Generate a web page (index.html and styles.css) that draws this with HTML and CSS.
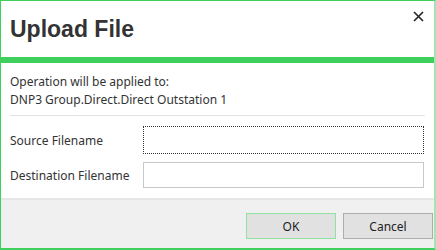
FILE: index.html
```html
<!DOCTYPE html>
<html lang="en">
<head>
    <meta charset="UTF-8">
    <title>Upload File</title>
    <link rel="stylesheet" href="styles.css">
</head>
<body>
    <div class="dialog">
        <div class="dialog-header">
            <h2>Upload File</h2>
            <button class="close" aria-label="Close">
                <svg width="11" height="11" viewBox="0 0 11 11"><path d="M1 1L10 10M10 1L1 10" stroke="#222" stroke-width="1.6"/></svg>
            </button>
        </div>
        <div class="accent"></div>

        <div class="dialog-body">
            <div class="target">
                <p>Operation will be applied to:</p>
                <p>DNP3 Group.Direct.Direct Outstation 1</p>
            </div>
            <div class="field">
                <label for="src">Source Filename</label>
                <input type="text" id="src" class="focused">
            </div>
            <div class="field">
                <label for="dst">Destination Filename</label>
                <input type="text" id="dst">
            </div>
        </div>

        <div class="dialog-footer">
            <button class="btn btn-default">OK</button>
            <button class="btn">Cancel</button>
        </div>
    </div>
</body>
</html>
```

FILE: styles.css
```css
body {
    margin: 0;
    font-family: "Noto Sans", "Open Sans", sans-serif;
    font-size: 12px;
    color: #333;
    background: white;
}
.dialog {
    box-sizing: border-box;
    width: 436px;
    height: 250px;
    display: flex;
    flex-direction: column;
    border-top: 1px solid #3ecf5c;
    border-left: 1px solid #3ecf5c;
    border-bottom: 2px solid #3ecf5c;
    border-right: 2px solid #a3e6b2;
}
.dialog-header {
    position: relative;
    height: 56px;
    padding-left: 9px;
    display: flex;
    align-items: center;
}
.dialog-header h2 {
    margin: 0;
    font-family: "Liberation Sans", Arial, sans-serif;
    font-size: 23px;
    font-weight: bold;
    color: #333;
}
.close {
    position: absolute;
    top: 9px;
    right: 9px;
    width: 13px;
    height: 13px;
    padding: 1px;
    border: none;
    background: none;
    line-height: 0;
}
.accent {
    height: 6px;
    background: #3ecf5c;
}
.dialog-body {
    flex: 1;
    padding: 10px 9px 0 9px;
}
.target {
    padding-bottom: 6px;
    border-bottom: 1px solid #e3e3e3;
    margin-bottom: 10px;
}
.target p {
    margin: 0;
    line-height: 18px;
}
.field {
    display: flex;
    align-items: center;
    margin-bottom: 8px;
}
.field label {
    width: 133px;
}
.field input {
    box-sizing: border-box;
    width: 281px;
    height: 26px;
    border: 1px solid #c8c8c8;
    font: inherit;
}
.field input.focused {
    height: 28px;
    border: 1px dotted #333;
}
.dialog-footer {
    height: 50px;
    background: #f0f0f0;
    border-top: 2px solid #e6e6e6;
    display: flex;
    justify-content: flex-end;
    align-items: center;
    gap: 7px;
    padding-right: 1px;
    padding-top: 4px;
    box-sizing: border-box;
}
.btn {
    width: 90px;
    height: 26px;
    background: #e1e1e1;
    border: 1px solid #adadad;
    font-family: "Noto Sans", "Open Sans", sans-serif;
    font-size: 12px;
    color: #222;
}
.btn-default {
    border-color: #8fe3a1;
}
```
